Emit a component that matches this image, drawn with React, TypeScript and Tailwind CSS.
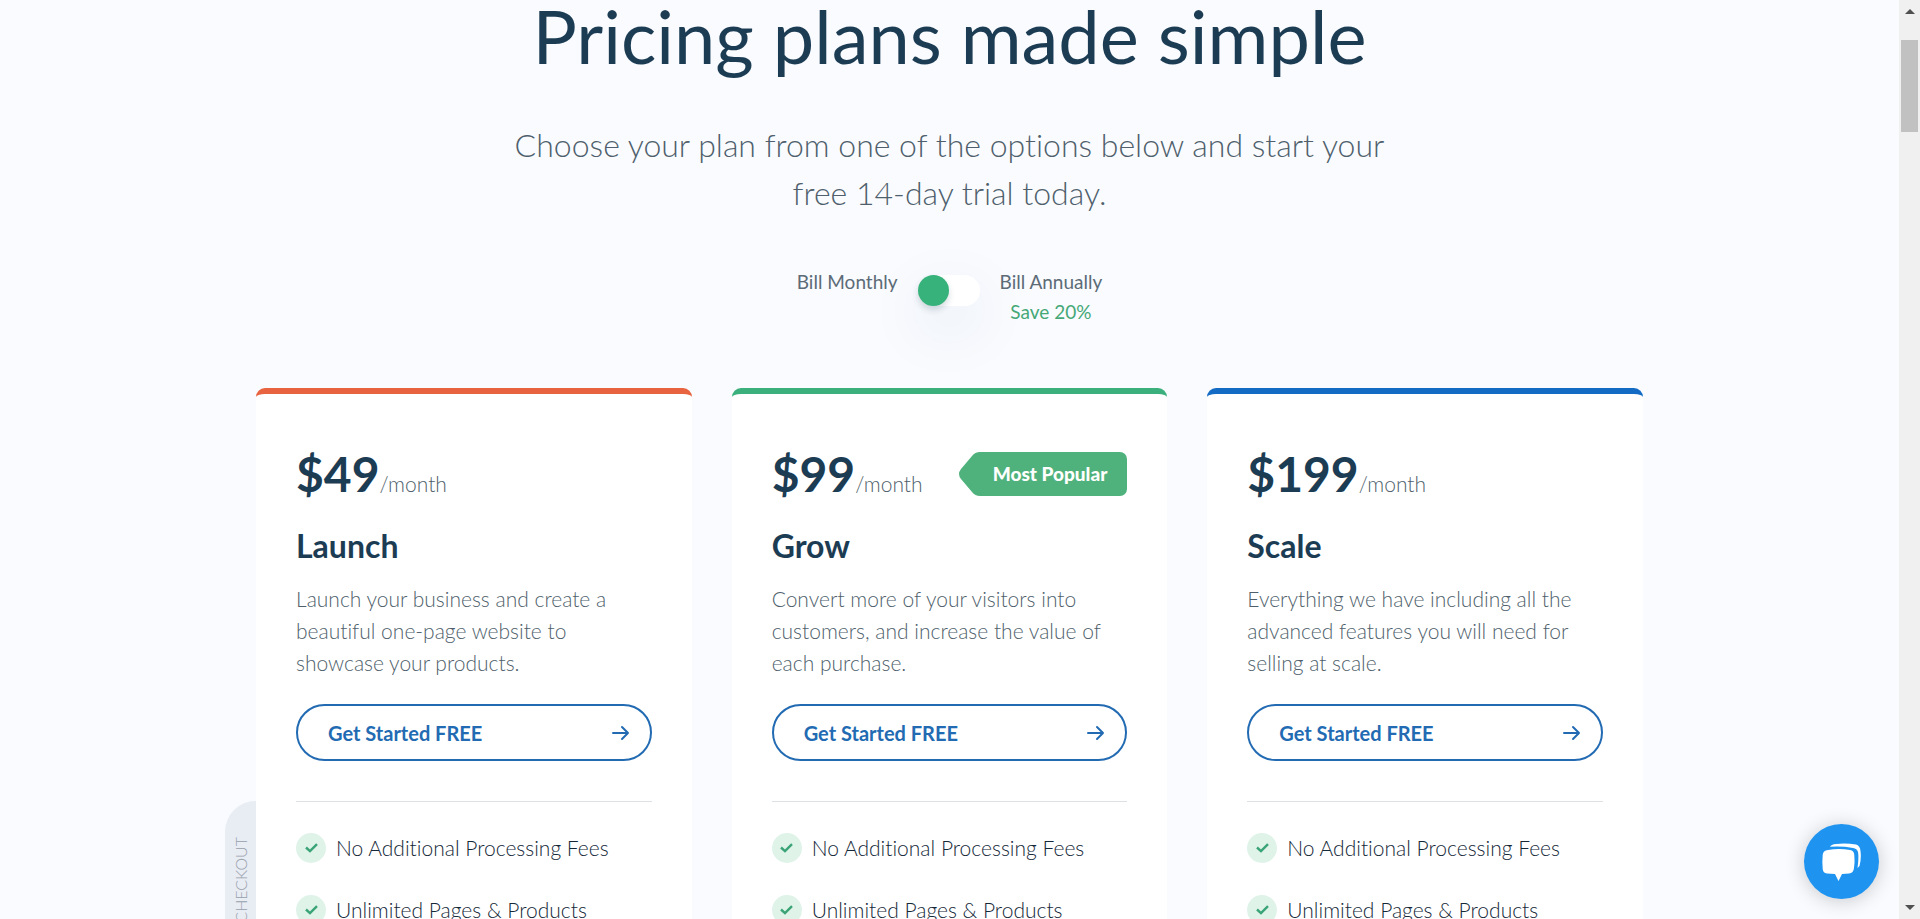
import { useState } from 'react';
import { clsx } from 'clsx';

const plans = [
  {
    name: 'Launch',
    price: '$49',
    description: 'Launch your business and create a beautiful one-page website to showcase your products.',
    border: 'border-[#e8633f]',
    popular: false,
  },
  {
    name: 'Grow',
    price: '$99',
    description: 'Convert more of your visitors into customers, and increase the value of each purchase.',
    border: 'border-[#3bb07c]',
    popular: true,
  },
  {
    name: 'Scale',
    price: '$199',
    description: 'Everything we have including all the advanced features you will need for selling at scale.',
    border: 'border-[#146bc4]',
    popular: false,
  },
];

const features = ['No Additional Processing Fees', 'Unlimited Pages & Products'];

function PopularBadge() {
  return (
    <div className="relative flex h-11 w-[168px] items-center justify-end pr-5">
      <svg className="absolute inset-0 h-full w-full" viewBox="0 0 168 44" fill="#4fb27c" aria-hidden="true">
        <path d="M21 0H161a7 7 0 0 1 7 7V37a7 7 0 0 1-7 7H21Q16 44 13 40L2 27Q-2 22 2 17L13 4Q16 0 21 0Z" />
      </svg>
      <span className="relative text-[19px] font-black text-white">Most Popular</span>
    </div>
  );
}

function PlanCard({ plan }: { plan: (typeof plans)[number] }) {
  return (
    <article className={clsx('rounded-t-[9px] border-t-[6px] bg-white px-10 pt-[49px]', plan.border)}>
      <div className="flex h-[62px] items-center justify-between">
        <p className="text-[#1c3c54]">
          <span className="text-5xl leading-[60px] font-bold">{plan.price}</span>
          <span className="text-[21px] font-light text-[#4f5f6c]">/month</span>
        </p>
        {plan.popular && <PopularBadge />}
      </div>
      <h2 className="mt-[19px] text-[32px] leading-[44px] font-bold text-[#1c3c54]">{plan.name}</h2>
      <p className="mt-[15px] min-h-24 text-[21px] leading-8 font-light text-[#4f5f6c]">{plan.description}</p>
      <button
        type="button"
        className="mt-[25px] flex h-[57px] w-full items-center justify-between rounded-full border-2 border-[#226bb3] pr-5 pl-[30px] text-xl font-bold text-[#226bb3]"
      >
        Get Started FREE
        <svg className="h-4 w-[18px]" viewBox="0 0 18 16" fill="none" stroke="currentColor" strokeWidth="2" strokeLinecap="round" strokeLinejoin="round">
          <path d="M1 8H16M10 2L16 8L10 14" />
        </svg>
      </button>
      <hr className="mt-10 border-[#dde1e4]" />
      <ul className="mt-[31px] flex flex-col gap-8">
        {features.map((feature) => (
          <li key={feature} className="flex h-[30px] items-center gap-2.5 text-[21px] leading-7 font-light text-[#142838]">
            <span className="flex h-[30px] w-[30px] shrink-0 items-center justify-center rounded-full bg-[#dff3e9]">
              <svg className="h-[10px] w-[13px]" viewBox="0 0 13 10" fill="none" stroke="#3ba477" strokeWidth="2.4">
                <path d="M1 4.5L5 8.2L12 1.2" />
              </svg>
            </span>
            {feature}
          </li>
        ))}
      </ul>
    </article>
  );
}

function BillingToggle() {
  const [annual, setAnnual] = useState(false);

  return (
    <div className="mt-[50px] flex h-[74px] justify-center gap-5 text-[19px] leading-[30px] text-[#5c6b77]">
      <span>Bill Monthly</span>
      <button
        type="button"
        role="switch"
        aria-checked={annual}
        aria-label="Bill annually"
        onClick={() => setAnnual(!annual)}
        className={clsx(
          'mt-2 flex h-[31px] w-[62px] rounded-full bg-white shadow-[0_20px_60px_rgba(28,60,84,0.1)]',
          annual && 'justify-end'
        )}
      >
        <span className="h-[31px] w-[31px] rounded-full bg-[#38b27b] shadow-[0_4px_6px_rgba(28,60,84,0.18)]" />
      </button>
      <span className="flex flex-col items-center">
        Bill Annually
        <span className="text-[#46a877]">Save 20%</span>
      </span>
    </div>
  );
}

function ChatIcon() {
  return (
    <svg className="h-[38px] w-[39px]" viewBox="0 0 39 38" fill="#fff" aria-hidden="true">
      <path d="M6 7Q17 5 28 7Q32 7.500 32.300 12Q33 19 32 25Q31.500 30 27 30.500L20 31L16.500 38L13 31L5 30.500Q1 30 .7 26Q0 19 .7 12Q1 7.500 6 7Z" />
      <path d="M8 3.800Q9 1.500 14 1Q24 0 34 1.500Q38 2.500 38.500 8Q39.500 16 37.500 23L35.500 25Q37 15 36 9Q35 5.500 31 5Q20 3 8 3.800Z" />
    </svg>
  );
}

export default function App() {
  return (
    <div className="flex h-screen overflow-hidden bg-[#f9fbff] font-['Lato',sans-serif] [font-variant-ligatures:none]">
      <main className="min-w-0 flex-1">
        <header className="text-center">
          <h1 className="text-[74px] leading-[72px] text-[#1c3c54]">Pricing plans made simple</h1>
          <p className="mx-auto mt-[49px] max-w-[900px] text-[32px] leading-[48px] font-light text-[#4f5f6c]">
            Choose your plan from one of the options below and start your free 14-day trial today.
          </p>
        </header>

        <BillingToggle />

        <section className="relative mx-auto mt-[47px] grid max-w-[1387px] grid-cols-3 gap-10">
          {/* Category tab sticking out from the left card */}
          <div className="absolute top-[413px] right-full flex h-[260px] w-[31px] items-start justify-center rounded-l-[31px] bg-[#e8ecf3] pt-9">
            <span className="rotate-180 text-base leading-4 font-light text-[#97a0ac] [writing-mode:vertical-rl]">CHECKOUT</span>
          </div>
          {plans.map((plan) => (
            <PlanCard key={plan.name} plan={plan} />
          ))}
        </section>
      </main>

      {/* Scroll track */}
      <div className="flex w-[21px] flex-col items-center bg-[#f0f0f0]" aria-hidden="true">
        <svg className="mt-[9px] h-[5px] w-[10px]" viewBox="0 0 10 5" fill="#505050">
          <path d="M5 0L10 5H0Z" />
        </svg>
        <div className="mt-[26px] h-[92px] w-[17px] bg-[#c1c1c1]" />
        <svg className="mt-auto mb-[9px] h-[5px] w-[10px]" viewBox="0 0 10 5" fill="#505050">
          <path d="M0 0H10L5 5Z" />
        </svg>
      </div>

      <button
        type="button"
        aria-label="Open chat"
        className="fixed right-[41px] bottom-5 flex h-[75px] w-[75px] items-center justify-center rounded-full bg-[#1f93f0] shadow-[0_2px_20px_rgba(0,0,0,0.2)]"
      >
        <ChatIcon />
      </button>
    </div>
  );
}
